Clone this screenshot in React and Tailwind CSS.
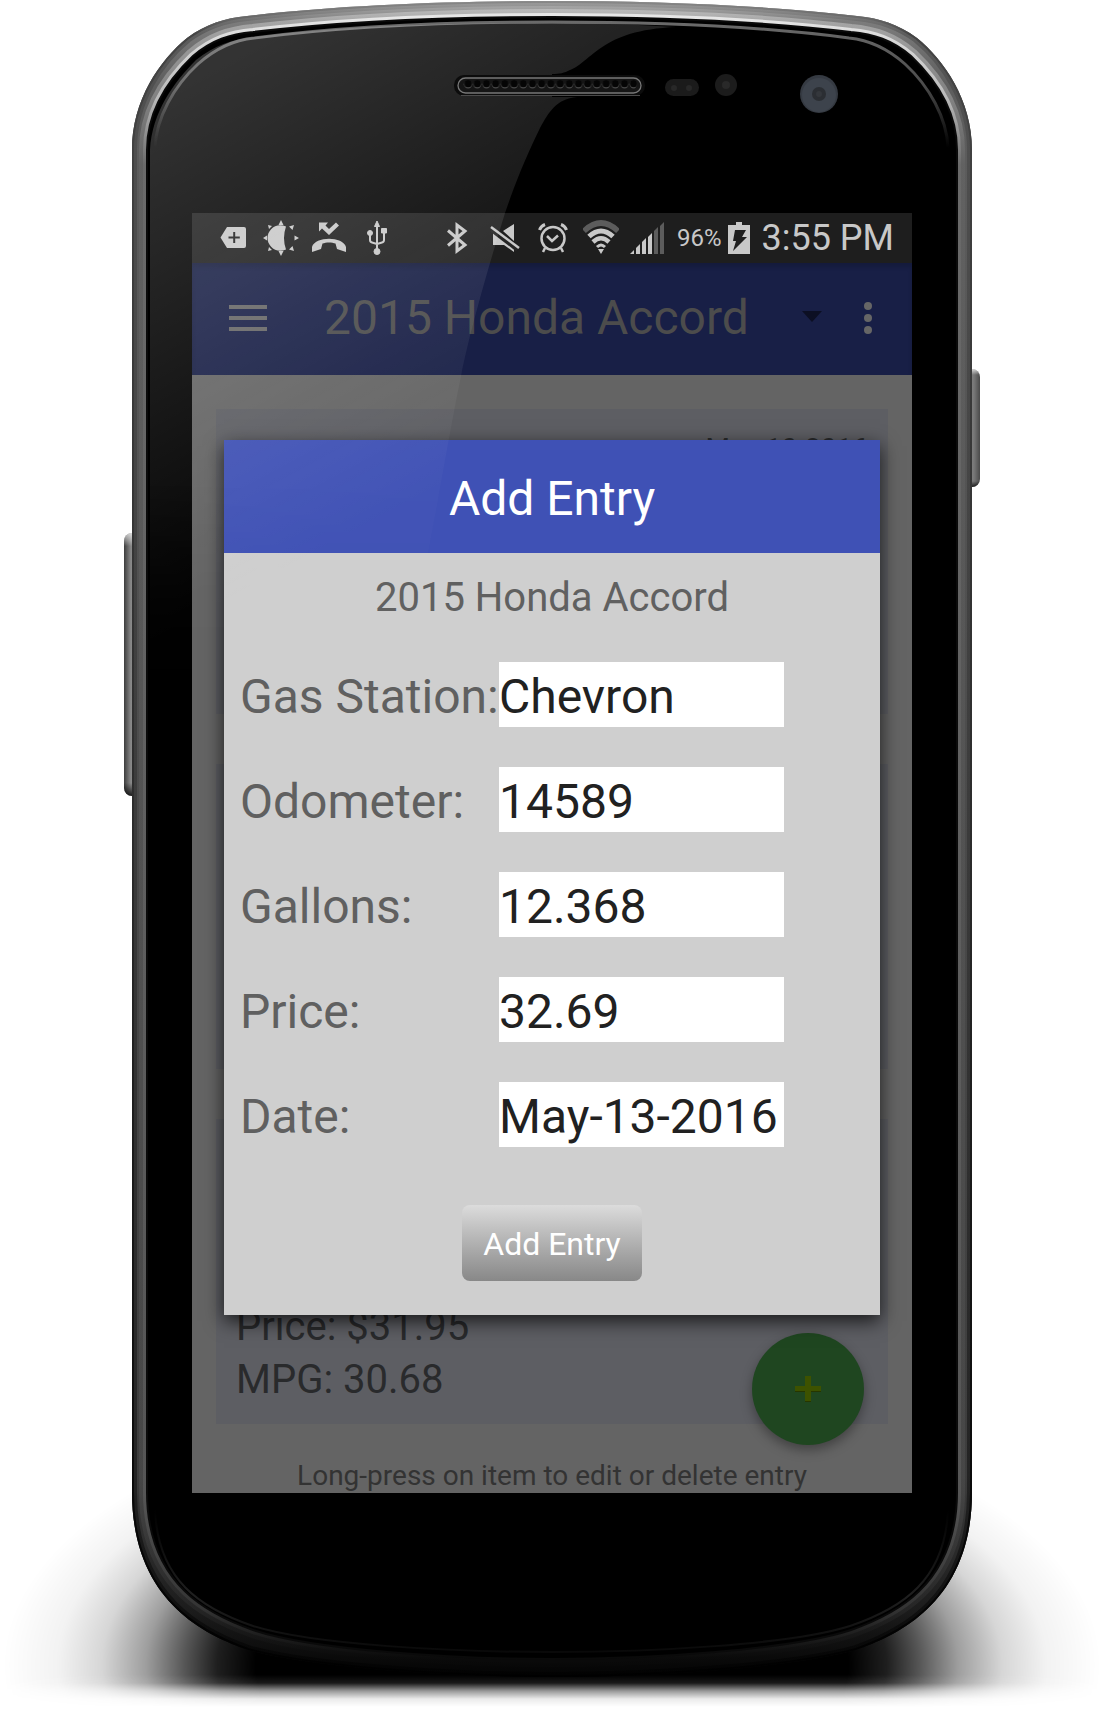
const BODY =
  "M132 150 C132 100 160 60 187 38 C206 24 225 18 247 16 C340 5 450 1 552 1 C654 1 763 5 857 16 C879 18 898 24 917 38 C944 60 972 100 972 150 V1492 C972 1600 901 1634 856 1650 C790 1668 650 1677 552 1677 C453 1677 313 1668 248 1650 C203 1634 132 1600 132 1492 Z";
const GLASS =
  "M147 150 C147 108 172 76 193 56 C212 40 230 34 253 32 C345 21 450 17 552 17 C653 17 758 21 851 32 C874 34 892 40 911 56 C932 76 957 108 957 150 V1492 C957 1587 891 1616 851 1630 C790 1650 650 1659 552 1659 C453 1659 313 1650 253 1630 C213 1616 147 1587 147 1492 Z";
const LIP =
  "M155 148 C156 118 174 86 198 64 C216 48 234 40 254 38 C345 26 450 22 552 22 C653 22 758 26 849 38 C869 40 887 48 905 64 C929 86 947 118 948 148";
const LOWER_LIP =
  "M155 1510 C158 1580 200 1608 253 1626 C313 1645 453 1652 552 1652 C650 1652 790 1645 850 1626 C903 1608 945 1580 948 1510";

function PhoneBody() {
  return (
    <svg className="absolute inset-0 h-full w-full" viewBox="0 0 1101 1709" preserveAspectRatio="none" aria-hidden="true">
      <defs>
        <linearGradient id="rim" x1="0" y1="0" x2="0" y2="1">
          <stop offset="0" stopColor="#b4b4b4" />
          <stop offset="0.012" stopColor="#7c7c7c" />
          <stop offset="0.05" stopColor="#5e5e5e" />
          <stop offset="0.5" stopColor="#4a4a4a" />
          <stop offset="0.88" stopColor="#3d3d3d" />
          <stop offset="0.96" stopColor="#1c1c1c" />
          <stop offset="1" stopColor="#030303" />
        </linearGradient>
        <linearGradient id="shine" x1="0" y1="0" x2="0" y2="1">
          <stop offset="0" stopColor="#e6e6e6" />
          <stop offset="0.05" stopColor="#b8b8b8" />
          <stop offset="0.09" stopColor="#6a6a6a" />
          <stop offset="0.9" stopColor="#555555" />
          <stop offset="0.97" stopColor="#333333" />
          <stop offset="1" stopColor="#0a0a0a" />
        </linearGradient>
        <linearGradient id="edge" x1="0" y1="0" x2="0" y2="1">
          <stop offset="0" stopColor="#8a8a8a" />
          <stop offset="0.02" stopColor="#444444" />
          <stop offset="0.5" stopColor="#2c2c2c" />
          <stop offset="1" stopColor="#000000" />
        </linearGradient>
        <linearGradient id="lip" x1="0" y1="0" x2="0" y2="1">
          <stop offset="0" stopColor="#6a6a6a" />
          <stop offset="0.5" stopColor="#4c4c4c" />
          <stop offset="1" stopColor="#000000" />
        </linearGradient>
        <linearGradient id="lowerLip" x1="0" y1="0" x2="0" y2="1">
          <stop offset="0" stopColor="#000000" />
          <stop offset="0.6" stopColor="#202020" />
          <stop offset="1" stopColor="#090909" />
        </linearGradient>
        <linearGradient id="key" x1="0" y1="0" x2="1" y2="0">
          <stop offset="0" stopColor="#3c3c3c" />
          <stop offset="0.35" stopColor="#8a8a8a" />
          <stop offset="0.7" stopColor="#777777" />
          <stop offset="1" stopColor="#4a4a4a" />
        </linearGradient>
        <linearGradient id="keyEnds" x1="0" y1="0" x2="0" y2="1">
          <stop offset="0" stopColor="#ffffff" stopOpacity="0.7" />
          <stop offset="0.05" stopColor="#ffffff" stopOpacity="0" />
          <stop offset="0.95" stopColor="#000000" stopOpacity="0" />
          <stop offset="1" stopColor="#000000" stopOpacity="0.8" />
        </linearGradient>
        <radialGradient id="ground" gradientUnits="userSpaceOnUse" cx="0" cy="0" r="1" gradientTransform="translate(552 1665) scale(549 270)">
          <stop offset="0" stopColor="#000000" />
          <stop offset="0.54" stopColor="#000000" />
          <stop offset="0.61" stopColor="#000000" stopOpacity="0.88" />
          <stop offset="0.67" stopColor="#000000" stopOpacity="0.66" />
          <stop offset="0.74" stopColor="#000000" stopOpacity="0.38" />
          <stop offset="0.82" stopColor="#000000" stopOpacity="0.16" />
          <stop offset="0.9" stopColor="#000000" stopOpacity="0.05" />
          <stop offset="1" stopColor="#000000" stopOpacity="0" />
        </radialGradient>
        <linearGradient id="groundFade" gradientUnits="userSpaceOnUse" x1="0" y1="1675" x2="0" y2="1707">
          <stop offset="0" stopColor="#ffffff" />
          <stop offset="0.25" stopColor="#ffffff" stopOpacity="0.9" />
          <stop offset="0.5" stopColor="#ffffff" stopOpacity="0.4" />
          <stop offset="0.75" stopColor="#ffffff" stopOpacity="0.08" />
          <stop offset="1" stopColor="#ffffff" stopOpacity="0" />
        </linearGradient>
        <mask id="groundMask" maskUnits="userSpaceOnUse" x="0" y="1300" width="1101" height="409">
          <rect width="1101" height="1709" fill="url(#groundFade)" />
        </mask>
        <pattern id="grille" width="9.2" height="12" patternUnits="userSpaceOnUse" x="463.5" y="78">
          <circle cx="4.6" cy="6.5" r="4" fill="#484848" />
          <circle cx="4.6" cy="5.7" r="3.6" fill="#050505" />
        </pattern>
        <clipPath id="bodyClip">
          <path d={BODY} />
        </clipPath>
      </defs>

      <rect y="1340" width="1101" height="369" fill="url(#ground)" mask="url(#groundMask)" />

      <rect x="124" y="533" width="20" height="263" rx="8" fill="url(#key)" />
      <rect x="124" y="533" width="20" height="263" rx="8" fill="url(#keyEnds)" />
      <rect x="960" y="369" width="20" height="118" rx="8" fill="url(#key)" />
      <rect x="960" y="369" width="20" height="118" rx="8" fill="url(#keyEnds)" />

      <path d={BODY} fill="url(#rim)" />
      <g clipPath="url(#bodyClip)">
        <path d={BODY} fill="none" stroke="url(#edge)" strokeWidth="10" opacity="0.5" />
        <path d={BODY} fill="none" stroke="url(#edge)" strokeWidth="4" />
      </g>
      <path d={GLASS} fill="none" stroke="url(#shine)" strokeWidth="16" opacity="0.4" />
      <path d={GLASS} fill="none" stroke="url(#shine)" strokeWidth="8" />
      <path d={GLASS} fill="#000000" stroke="#0a0a0a" strokeWidth="2" />
      <path d={LIP} fill="none" stroke="url(#lip)" strokeWidth="3" />
      <path d={LOWER_LIP} fill="none" stroke="url(#lowerLip)" strokeWidth="2" />
    </svg>
  );
}

function GlassGloss() {
  return (
    <svg className="pointer-events-none absolute inset-0 h-full w-full" viewBox="0 0 1101 1709" preserveAspectRatio="none" aria-hidden="true">
      <defs>
        <linearGradient id="gloss" gradientUnits="userSpaceOnUse" x1="250" y1="50" x2="476" y2="469">
          <stop offset="0" stopColor="#ffffff" stopOpacity="0.2" />
          <stop offset="0.7" stopColor="#ffffff" stopOpacity="0.07" />
          <stop offset="1" stopColor="#ffffff" stopOpacity="0.02" />
        </linearGradient>
        <linearGradient id="glossFade" gradientUnits="userSpaceOnUse" x1="0" y1="480" x2="0" y2="690">
          <stop offset="0" stopColor="#ffffff" />
          <stop offset="1" stopColor="#ffffff" stopOpacity="0" />
        </linearGradient>
        <mask id="glossMask" maskUnits="userSpaceOnUse" x="0" y="0" width="1101" height="1709">
          <rect width="1101" height="1709" fill="url(#glossFade)" />
        </mask>
      </defs>
      <path
        mask="url(#glossMask)"
        d="M150 700 V150 C152 112 174 82 196 60 C214 46 232 39 254 37 C345 25 450 23 552 23 C600 23 640 25 676 27 C600 30 592 62 570 70 C564 73 560 74 552 74 V97 H577 C556 99 549 112 540 128 C522 165 513 190 505 213 C490 262 470 330 461 376 C450 430 440 490 428 553 L400 700 Z"
        fill="url(#gloss)"
      />
      <rect x="454" y="75" width="191" height="21" rx="10" fill="#0c0c0c" />
      <rect x="458" y="78" width="183" height="15" rx="7.5" fill="#151515" stroke="#777777" strokeWidth="1.3" />
      <rect x="463" y="78" width="174" height="12" rx="6" fill="url(#grille)" />
      <path d="M461 95.5 H640" stroke="#4a4a4a" strokeWidth="1" />
      <rect x="665" y="79" width="34" height="17" rx="8.5" fill="#1b1b1b" />
      <circle cx="674" cy="88" r="3" fill="#282828" />
      <circle cx="689" cy="88" r="3" fill="#282828" />
      <circle cx="726" cy="85" r="11" fill="#1c1c1c" />
      <circle cx="726" cy="85" r="4" fill="#292929" />
      <circle cx="819" cy="94" r="19" fill="#353a42" />
      <circle cx="819" cy="95" r="17" fill="#3d434c" />
      <circle cx="819" cy="94" r="7" fill="#2b2e33" />
      <circle cx="819" cy="94" r="3" fill="#34373c" />
    </svg>
  );
}

function StatusIcons() {
  return (
    <div className="flex items-center text-[#c8c8c8]">
      <svg className="ml-7 h-9 w-9" viewBox="0 0 36 36" fill="currentColor" aria-label="New item">
        <path fillRule="evenodd" d="M7 7 H24 Q26 7 26 9 V26 Q26 28 24 28 H7 L0.5 17.5 Z M13.2 12 V16.5 H8.5 V18.5 H13.2 V23 H15.2 V18.5 H19.8 V16.5 H15.2 V12 Z" />
      </svg>
      <svg className="ml-[7px] h-9 w-9" viewBox="0 0 36 36" fill="currentColor" aria-label="Brightness">
        <path d="M23 6.5 C13 2 4.5 10 4.5 18 C4.5 26 13 34 23 29.5 Q19 18 23 6.5 Z" />
        <path d="M18 0 L20.5 5 H15.5 Z M18 36 L20.5 31 H15.5 Z M0 18 L4 15.5 V20.5 Z M36 18 L31.5 15.5 V20.5 Z M5 5 L9 6 L6 9 Z M31 5 L26 6.5 L29.5 10 Z M5 31 L9 30 L6 27 Z M31 31 L26 29.5 L29.5 26 Z" />
      </svg>
      <svg className="ml-3 h-9 w-9" viewBox="0 0 36 36" fill="currentColor" aria-label="Missed call">
        <path d="M8 2.5 H17 L14.5 5.5 L18 9 L25 2.5 L28 5.5 L18 15 L11 8.5 L8 11.5 Z" />
        <path d="M1 32 V27 C4 16 32 16 35 27 V32 L26 29 L24.5 23.5 C21 22 15 22 11.5 23.5 L10 29 Z" />
      </svg>
      <svg className="ml-3 h-9 w-9" viewBox="0 0 36 36" fill="none" stroke="currentColor" strokeWidth="2" aria-label="USB">
        <path d="M18 4 V31 M11 14 V20 Q11 22 13 22.5 L18 24 M25 12 V20 Q25 22 23 22.5 L18 24" />
        <path d="M18 1 L20.5 6.5 H15.5 Z M22.5 8.5 H27.5 V13 H22.5 Z" fill="currentColor" strokeWidth="1" />
        <circle cx="11" cy="13" r="2.5" fill="currentColor" strokeWidth="1" />
        <circle cx="18" cy="31.5" r="3" fill="currentColor" strokeWidth="1" />
      </svg>
    </div>
  );
}

function SystemIcons() {
  return (
    <div className="flex items-center text-[#c8c8c8]">
      <svg className="h-9 w-9" viewBox="0 0 36 36" fill="none" stroke="currentColor" strokeWidth="3" aria-label="Bluetooth">
        <path d="M9 10.5 L26 25 L18 31 V5 L26 11 L9 25.5" />
      </svg>
      <svg className="ml-3 h-9 w-9" viewBox="0 0 36 36" fill="currentColor" aria-label="Sound off">
        <path d="M6 11 L27 27 V32 L17 25 H6 Z M16 11 L27 4 V21 Z" />
        <path d="M5 9 L31 29" fill="none" stroke="#242424" strokeWidth="6" />
        <path d="M4 7 L32 28" fill="none" stroke="currentColor" strokeWidth="2.5" />
      </svg>
      <svg className="ml-3 h-9 w-9" viewBox="0 0 36 36" fill="none" stroke="currentColor" strokeWidth="2.5" aria-label="Alarm">
        <circle cx="18" cy="18.5" r="11.5" />
        <path d="M12 16 L17 21 L23 15.5 M10 28 L8 32 M26 28 L28 32" />
        <path d="M4.5 10 Q6 6 10 4.5 M31.5 10 Q30 6 26 4.5" strokeWidth="3" />
      </svg>
      <svg className="ml-3 h-9 w-9" viewBox="0 0 36 36" fill="none" stroke="currentColor" strokeWidth="4" aria-label="Wi-Fi">
        <path d="M1 11 Q18 -5 35 11" stroke="#5c5c5c" strokeWidth="5.5" />
        <path d="M6 16.5 Q18 5.5 30 16.5" strokeWidth="5" />
        <path d="M10 22 Q18 14.5 26 22" strokeWidth="4.5" />
        <path d="M14 27 Q18 23 22 27" strokeWidth="3" />
        <path d="M15 29 H21 L18 34 Z" fill="currentColor" stroke="none" />
      </svg>
      <svg className="ml-[10px] h-9 w-9" viewBox="0 0 36 36" fill="currentColor" aria-label="Signal">
        <path d="M1 34 L5 30 V34 Z M7 28 L11 24 V34 H7 Z M13 22 L17 18 V34 H13 Z M19 17 L23 13 V34 H19 Z" />
        <path d="M25 11 L29 7 V34 H25 Z M31 6 L35 2 V34 H31 Z" fill="#5c5c5c" />
      </svg>
      <span className="ml-3 text-2xl">96%</span>
      <svg className="ml-1.5 h-8 w-[22px]" viewBox="0 0 22 32" fill="currentColor" aria-label="Battery charging">
        <path d="M8 0 H14 V3 H22 V32 H0 V3 H8 Z" />
        <path d="M7 8 H18 L14 15 H19 L5 29 L8 19 H5 Z" fill="#1e1e1e" />
      </svg>
      <span className="ml-3 text-4xl">3:55 PM</span>
    </div>
  );
}

function StatusBar() {
  return (
    <div className="flex h-[50px] items-center justify-between bg-[#1e1e1e] pr-[18px]">
      <StatusIcons />
      <SystemIcons />
    </div>
  );
}

function AppBar() {
  return (
    <header className="flex h-28 items-center bg-[#181f46] pr-[26px] pb-0.5 pl-9 shadow-[inset_0_4px_4px_rgba(0,0,0,0.15)]">
      <button type="button" aria-label="Open menu" className="flex w-[40px] flex-col gap-[7px] px-px">
        <span className="h-1 bg-[#666666]" />
        <span className="h-1 bg-[#666666]" />
        <span className="h-1 bg-[#666666]" />
      </button>
      <button type="button" className="ml-14 flex flex-1 items-center justify-between text-5xl text-[#4c4c4c]">
        <span className="whitespace-nowrap">2015 Honda Accord</span>
        <svg className="mb-1 h-[11px] w-5" viewBox="0 0 20 11" aria-hidden="true">
          <path d="M0 0 H20 L10 11 Z" fill="#0c0f23" />
        </svg>
      </button>
      <button type="button" aria-label="More options" className="ml-7 flex w-9 flex-col items-center gap-1">
        <span className="h-2 w-2 rounded-full bg-[#666666]" />
        <span className="h-2 w-2 rounded-full bg-[#666666]" />
        <span className="h-2 w-2 rounded-full bg-[#666666]" />
      </button>
    </header>
  );
}

function EntryCard({ date, lines = [] }) {
  return (
    <li className="flex min-h-[305px] flex-col justify-between bg-[#5d5e63] px-5 pt-6 pb-[18px] text-[40px] leading-[53px] text-[#292a2c]">
      <p className="text-right text-[28px] leading-8">{date}</p>
      <div>
        {lines.map((line) => (
          <p key={line}>{line}</p>
        ))}
      </div>
    </li>
  );
}

const FIELDS = [
  { id: "station", label: "Gas Station:", value: "Chevron" },
  { id: "odometer", label: "Odometer:", value: "14589" },
  { id: "gallons", label: "Gallons:", value: "12.368" },
  { id: "price", label: "Price:", value: "32.69" },
  { id: "date", label: "Date:", value: "May-13-2016" },
];

function AddEntryDialog() {
  return (
    <div className="absolute inset-x-0 top-[50px] bottom-0.5 flex items-center px-8">
      <section
        role="dialog"
        aria-labelledby="dialog-title"
        className="w-full bg-[#cfcfcf] shadow-[0_6px_18px_rgba(0,0,0,0.75)]"
      >
        <h2 id="dialog-title" className="bg-[#3f51b5] pt-[31px] pb-[26px] text-center text-5xl leading-14 text-white">
          Add Entry
        </h2>
        <form className="flex flex-col" onSubmit={(event) => event.preventDefault()}>
          <p className="pt-[17px] text-center text-[40px] leading-14 text-[#606060]">2015 Honda Accord</p>
          <div className="mt-9 flex flex-col gap-10">
            {FIELDS.map((field) => (
              <div key={field.id} className="flex h-[65px] items-center pr-24 pl-4 text-5xl">
                <label htmlFor={field.id} className="w-[259px] shrink-0 pt-1.5 whitespace-nowrap text-[#606060]">
                  {field.label}
                </label>
                <input
                  id={field.id}
                  defaultValue={field.value}
                  className="h-full min-w-0 flex-1 bg-white pt-1 text-[#212121] outline-none"
                />
              </div>
            ))}
          </div>
          <button
            type="submit"
            className="mx-auto mt-[58px] mb-[34px] h-[76px] w-[180px] rounded-lg bg-linear-to-b from-[#dcdcdc] to-[#888888] pt-0.5 text-[32px] text-white"
          >
            Add Entry
          </button>
        </form>
      </section>
    </div>
  );
}

export default function App() {
  return (
    <main className="min-h-screen bg-white font-['Roboto',sans-serif]">
      <div className="relative mx-auto max-w-[1101px] pt-[213px] pr-[189px] pb-[216px] pl-[192px]">
        <PhoneBody />
        <div className="relative overflow-hidden bg-[#646464]">
          <StatusBar />
          <AppBar />
          <ul className="flex flex-col gap-[50px] px-6 pt-[34px]">
            <EntryCard date="May-10-2016" />
            <EntryCard />
            <EntryCard lines={["Price: $31.95", "MPG: 30.68"]} />
          </ul>
          <p className="pt-9 pb-px text-center text-[28px] leading-8 text-[#333333]">Long-press on item to edit or delete entry</p>
          <button
            type="button"
            aria-label="Add entry"
            className="absolute right-12 bottom-12 flex h-28 w-28 items-center justify-center rounded-full bg-[#1f4620] shadow-[0_5px_12px_rgba(0,0,0,0.35)]"
          >
            <svg className="h-7 w-7" viewBox="0 0 28 28" aria-hidden="true">
              <path d="M11 1 H17 V11 H27 V17 H17 V27 H11 V17 H1 V11 H11 Z" fill="#3d5200" />
              <path d="M1 16.5 H11 M17 16.5 H27 M11 26.5 H17" stroke="#263600" strokeWidth="1" />
            </svg>
          </button>
          <AddEntryDialog />
        </div>
        <GlassGloss />
      </div>
    </main>
  );
}
